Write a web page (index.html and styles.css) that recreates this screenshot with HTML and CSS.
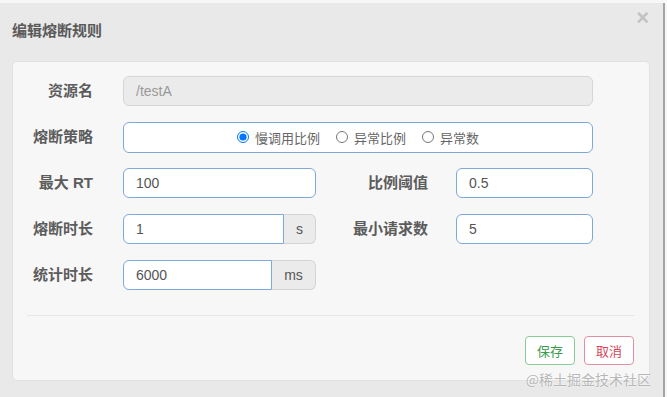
FILE: index.html
```html
<!DOCTYPE html>
<html lang="zh-CN">
<head>
    <meta charset="UTF-8">
    <meta name="viewport" content="width=device-width, initial-scale=1.0">
    <title>编辑熔断规则</title>
    <link rel="stylesheet" href="styles.css">
</head>
<body>
    <div class="modal">
        <div class="modal-header">
            <h4 class="modal-title">编辑熔断规则</h4>
            <span class="close">&times;</span>
        </div>

        <div class="modal-body">
            <form class="rule-form">
                <label class="form-label">资源名</label>
                <input class="form-input span-3" type="text" value="/testA" disabled>

                <label class="form-label">熔断策略</label>
                <div class="radio-box span-3">
                    <label class="radio"><input type="radio" name="grade" checked>慢调用比例</label>
                    <label class="radio"><input type="radio" name="grade">异常比例</label>
                    <label class="radio"><input type="radio" name="grade">异常数</label>
                </div>

                <label class="form-label">最大 RT</label>
                <input class="form-input" type="text" value="100">
                <label class="form-label label-right">比例阈值</label>
                <input class="form-input" type="text" value="0.5">

                <label class="form-label">熔断时长</label>
                <div class="input-group">
                    <input class="form-input" type="text" value="1">
                    <span class="addon">s</span>
                </div>
                <label class="form-label label-right">最小请求数</label>
                <input class="form-input" type="text" value="5">

                <label class="form-label">统计时长</label>
                <div class="input-group">
                    <input class="form-input" type="text" value="6000">
                    <span class="addon addon-wide">ms</span>
                </div>
            </form>

            <div class="modal-footer">
                <button class="btn btn-save">保存</button>
                <button class="btn btn-cancel">取消</button>
            </div>
        </div>

        <div class="watermark">@稀土掘金技术社区</div>
    </div>
</body>
</html>
```

FILE: styles.css
```css
/* Общий стиль */
body {
    margin: 0;
    padding: 0;
    background: #f7f7f7;
    font-family: "Liberation Sans", "Noto Sans CJK SC", sans-serif;
    color: #555;
    overflow: hidden;
}

/* Окно */
.modal {
    position: relative;
    margin-top: 3px;
    width: 663px;
    height: 394px;
    background: #e9e9e9;
    border-right: 2px solid #a4a4a4;
}

.modal-header {
    display: flex;
    justify-content: space-between;
    align-items: flex-start;
    height: 58px;
    padding: 0 12px 0 12px;
    box-sizing: border-box;
}

.modal-title {
    margin: 17px 0 0 0;
    font-family: "Noto Sans CJK SC", sans-serif;
    font-size: 15px;
    line-height: 20px;
    font-weight: bold;
    color: #5a5a5a;
}

.close {
    margin-top: 4px;
    margin-right: 2px;
    font-size: 22px;
    line-height: 22px;
    color: #c2c2c2;
    font-weight: bold;
}

/* Панель формы */
.modal-body {
    margin: 0 13px 0 12px;
    padding: 14px 0 14px 0;
    background: #f7f7f7;
    border: 1px solid #e2e2e2;
    border-radius: 5px;
    box-sizing: border-box;
    height: 320px;
}

.rule-form {
    display: grid;
    grid-template-columns: 110px 193px 140px 137px;
    grid-auto-rows: 30px;
    row-gap: 16px;
    align-items: center;
}

.form-label {
    text-align: right;
    padding-right: 30px;
    font-family: "Liberation Sans", "Noto Sans CJK SC", sans-serif;
    font-size: 15px;
    font-weight: bold;
    color: #5c5c5c;
    line-height: 20px;
}

.label-right {
    padding-right: 28px;
}

.span-3 {
    grid-column: span 3;
}

.form-input {
    height: 30px;
    box-sizing: border-box;
    width: 100%;
    padding: 0 12px;
    border: 1px solid #7ea8d8;
    border-radius: 6px;
    background: #fff;
    font-family: "Liberation Sans", sans-serif;
    font-size: 14px;
    color: #555;
    outline: none;
}

.form-input:disabled {
    background: #ebebeb;
    border-color: #d6d6d6;
    color: #999;
}

/* Переключатели */
.radio-box {
    height: 31px;
    box-sizing: border-box;
    border: 1px solid #7ea8d8;
    border-radius: 6px;
    background: #fff;
    display: flex;
    justify-content: center;
    align-items: center;
    gap: 16px;
}

.radio {
    display: flex;
    align-items: center;
    gap: 6px;
    font-family: "Noto Sans CJK SC", sans-serif;
    font-size: 13px;
    color: #666;
}

.radio input {
    margin: 0;
    width: 12px;
    height: 12px;
}

/* Группа с единицами */
.input-group {
    display: flex;
    height: 30px;
}

.input-group .form-input {
    flex: 1;
    border-radius: 6px 0 0 6px;
}

.addon {
    width: 32px;
    flex: none;
    box-sizing: border-box;
    display: flex;
    justify-content: center;
    align-items: center;
    background: #ebebeb;
    border: 1px solid #d4d4d4;
    border-left: none;
    border-radius: 0 6px 6px 0;
    font-size: 14px;
    color: #555;
}

.addon-wide {
    width: 44px;
}

/* Нижняя часть */
.modal-footer {
    margin: 25px 15px 0 14px;
    padding-top: 20px;
    border-top: 1px solid #e6e6e6;
    display: flex;
    justify-content: flex-end;
    gap: 9px;
}

.btn {
    width: 50px;
    height: 29px;
    background: #fff;
    border-radius: 4px;
    font-family: "Noto Sans CJK SC", sans-serif;
    font-size: 13px;
    padding: 0;
}

.btn-save {
    border: 1px solid #85cc95;
    color: #3d9a4e;
}

.btn-cancel {
    border: 1px solid #e290a0;
    color: #d5475e;
}

.watermark {
    position: absolute;
    right: 12px;
    bottom: 10px;
    font-family: "Noto Sans CJK SC", sans-serif;
    font-size: 14px;
    line-height: 16px;
    color: #b8b8b8;
    text-shadow: 0 0 2px #fff;
}
```
